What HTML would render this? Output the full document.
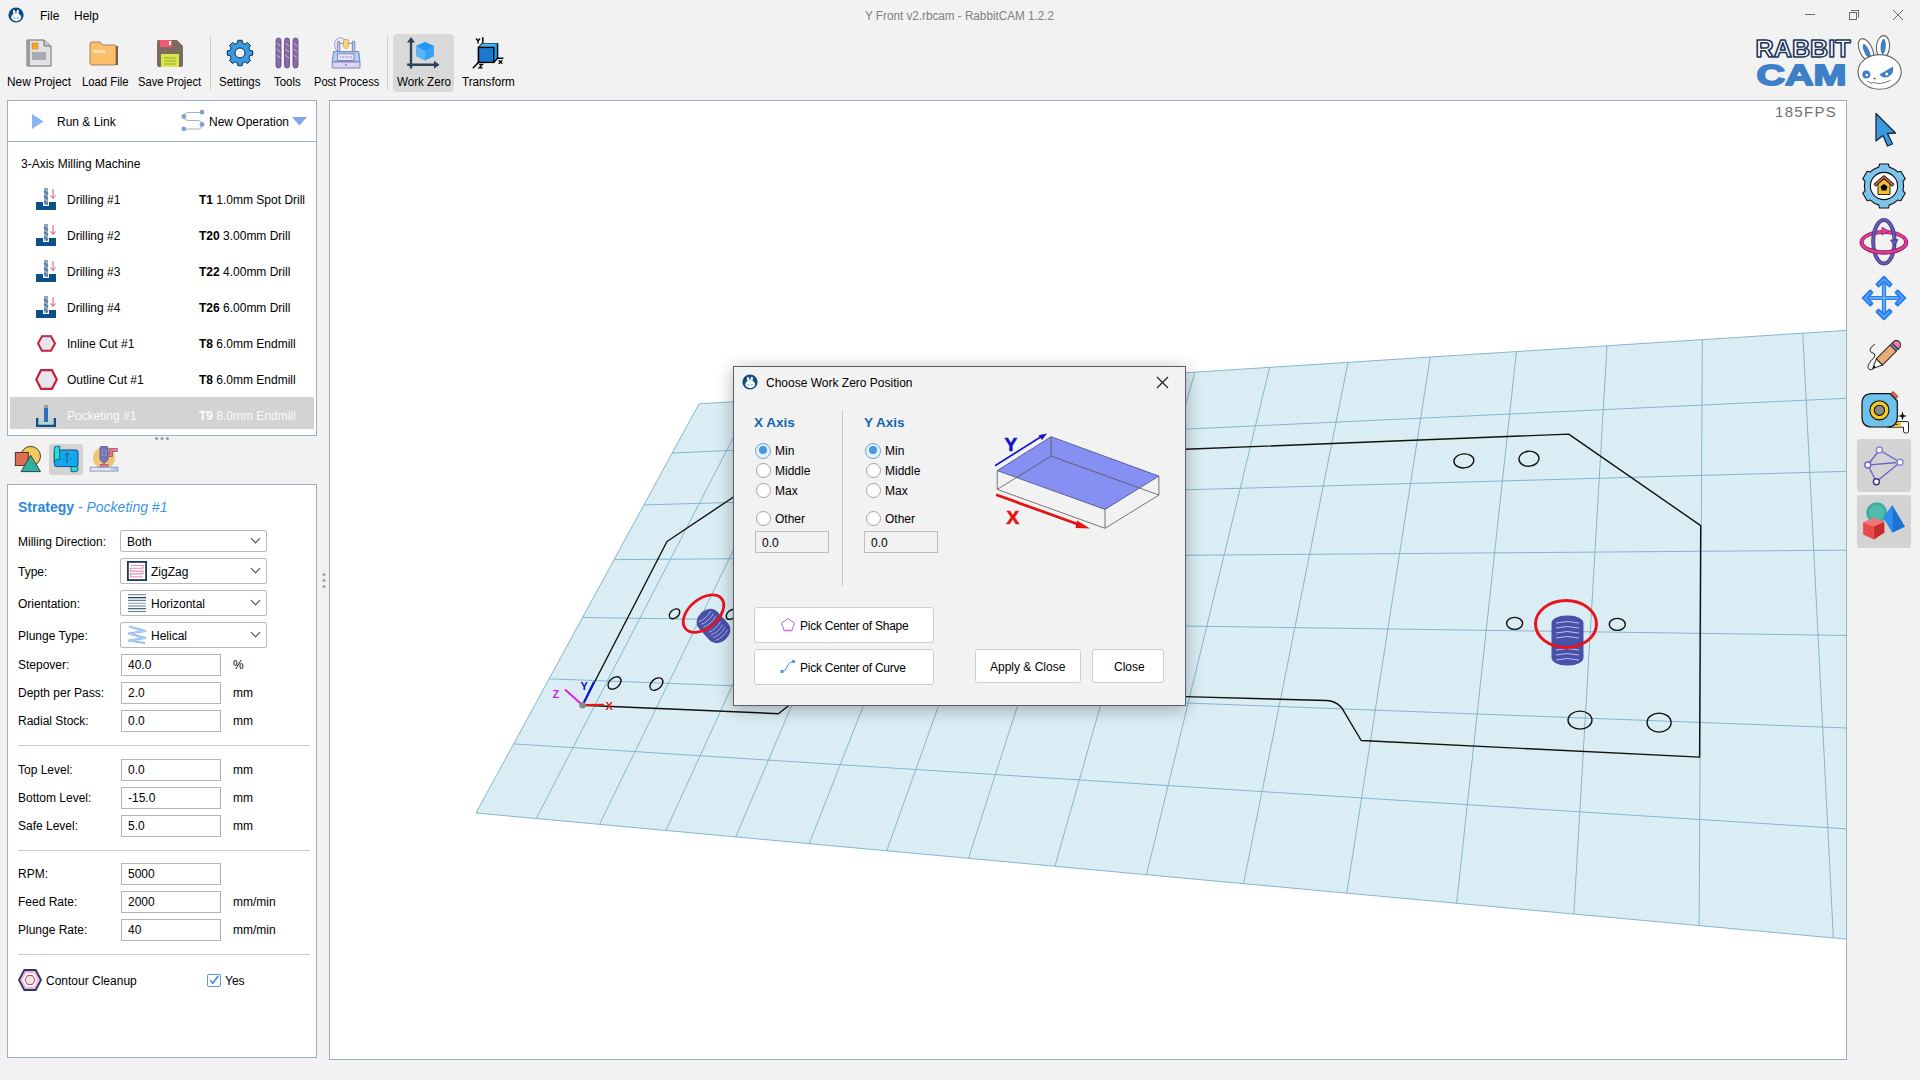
<!DOCTYPE html>
<html><head><meta charset="utf-8">
<style>
*{box-sizing:border-box;margin:0;padding:0}
html,body{width:1920px;height:1080px;overflow:hidden;background:#f2f2f2;font-family:"Liberation Sans",sans-serif;font-size:12px;color:#000}
.a{position:absolute}
.t{position:absolute;white-space:nowrap;line-height:12px;font-size:12px}
.box{position:absolute;background:#fff;border:1px solid #9eafc2}
.inp{position:absolute;background:#fff;border:1px solid #b4b4b4;width:100px;height:22px}
.inp span{position:absolute;left:6px;top:4px;font-size:12px;line-height:12px}
.cmb{position:absolute;background:#fff;border:1px solid #b8b8b8;border-radius:2px;width:147px}
.chev{position:absolute;width:7px;height:7px;border-right:1px solid #444;border-bottom:1px solid #444;transform:rotate(45deg)}
.sep{position:absolute;height:1px;background:#c9c9c9}
.btn{position:absolute;background:#fff;border:1px solid #cfcfcf;border-radius:3px}
.radio{position:absolute;width:15px;height:15px;border-radius:50%;border:1px solid #a2a2a2;background:#fff}
.radio.on{border:1.5px solid #7a9ec4;background:#e2f3ff;width:16px;height:16px}
.radio.on::after{content:"";position:absolute;left:2.75px;top:2.75px;width:7.5px;height:7.5px;border-radius:50%;background:#4a98e0}
</style></head>
<body>
<!-- title bar -->
<svg class="a" style="left:8px;top:7px" width="16" height="16" viewBox="0 0 16 16"><circle cx="8" cy="8" r="7.6" fill="#0f4c7c"/><ellipse cx="8.2" cy="10.3" rx="4.9" ry="3.9" fill="#f4fbff"/><ellipse cx="6.3" cy="5.6" rx="1.3" ry="3" transform="rotate(-12 6.3 5.6)" fill="#e8f4fc"/><ellipse cx="9.6" cy="5.4" rx="1.3" ry="3" transform="rotate(8 9.6 5.4)" fill="#e8f4fc"/><path d="M5.6 11H7M9.2 11.2L10.6 10.6" stroke="#0f4c7c" stroke-width=".8"/></svg>
<div class="t" style="left:40px;top:10px">File</div>
<div class="t" style="left:74px;top:10px">Help</div>
<div class="t" style="left:865px;top:9.5px;color:#808080;transform:scaleX(.975);transform-origin:0 0">Y Front v2.rbcam - RabbitCAM 1.2.2</div>
<div class="a" style="left:1805px;top:14px;width:10px;height:1px;background:#6a6a6a"></div>
<div class="a" style="left:1849px;top:12px;width:8px;height:8px;border:1px solid #6a6a6a"></div>
<div class="a" style="left:1851px;top:10px;width:8px;height:8px;border-top:1px solid #6a6a6a;border-right:1px solid #6a6a6a"></div>
<svg class="a" style="left:1892px;top:9px" width="12" height="12" viewBox="0 0 12 12"><path d="M1 1L11 11M11 1L1 11" stroke="#6a6a6a" stroke-width="1"/></svg>

<!-- toolbar -->
<div class="a" style="left:393px;top:34px;width:61px;height:58px;background:#d9d9d9;border-radius:4px"></div>
<div class="a" style="left:210px;top:35px;width:1px;height:55px;background:#cfcfcf"></div>
<div class="a" style="left:387px;top:35px;width:1px;height:55px;background:#cfcfcf"></div>
<!-- new project icon -->
<svg class="a" style="left:26px;top:39px" width="26" height="28" viewBox="0 0 26 28"><path d="M1 1H18L25 7V27H1Z" fill="#e2e2e4" stroke="#6a6a72" stroke-width="1"/><rect x="1" y="1" width="3" height="26" fill="#9a9aa4"/><path d="M18 1V7H25" fill="#c8c8cc" stroke="#6a6a72" stroke-width="1"/><rect x="6" y="4" width="6" height="6" fill="#f5a623" stroke="#d48a10" stroke-width=".6"/><rect x="6" y="13" width="14" height="8" fill="#a9a9b0"/></svg>
<!-- folder -->
<svg class="a" style="left:89px;top:41px" width="31" height="25" viewBox="0 0 31 25"><path d="M26 5H29V24H26Z" fill="#7a5a48"/><path d="M1 3Q1 1 3 1H11L14 4H26Q27 4 27 6V22Q27 24 25 24H3Q1 24 1 22Z" fill="#fbbf6b" stroke="#8d6c55" stroke-width=".8"/><rect x="4" y="9" width="12" height="3" fill="#fde0b0"/></svg>
<!-- save -->
<svg class="a" style="left:156px;top:39px" width="28" height="29" viewBox="0 0 28 29"><path d="M2 1H21L27 7V26Q27 28 25 28H3Q1 28 1 26V3Q1 1 2 1Z" fill="#7d6b5e"/><rect x="4" y="1" width="12" height="7" fill="#ef5a72"/><rect x="13" y="2" width="2" height="4" fill="#fff"/><rect x="5" y="15" width="18" height="13" fill="#d8e84a"/><path d="M8 19H20M8 22H20M8 25H20" stroke="#9aa82a" stroke-width="1"/></svg>
<!-- settings gear -->
<svg class="a" style="left:226px;top:39px" width="28" height="28" viewBox="0 0 28 28"><path fill="#3a9ae0" stroke="#0b2a48" stroke-width="1" stroke-linejoin="round" d="M11.33 4.16L11.91 1.27L16.09 1.27L16.67 4.16A10.2 10.2 0 0 1 19.07 5.15L21.52 3.52L24.48 6.48L22.85 8.93A10.2 10.2 0 0 1 23.84 11.33L26.73 11.91L26.73 16.09L23.84 16.67A10.2 10.2 0 0 1 22.85 19.07L24.48 21.52L21.52 24.48L19.07 22.85A10.2 10.2 0 0 1 16.67 23.84L16.09 26.73L11.91 26.73L11.33 23.84A10.2 10.2 0 0 1 8.93 22.85L6.48 24.48L3.52 21.52L5.15 19.07A10.2 10.2 0 0 1 4.16 16.67L1.27 16.09L1.27 11.91L4.16 11.33A10.2 10.2 0 0 1 5.15 8.93L3.52 6.48L6.48 3.52L8.93 5.15A10.2 10.2 0 0 1 11.33 4.16Z"/><circle cx="14" cy="14" r="5" fill="#eef2f6" stroke="#0b2a48" stroke-width="1"/></svg>
<!-- tools -->
<svg class="a" style="left:275px;top:37px" width="24" height="32" viewBox="0 0 24 32"><g fill="#8a6aa8" stroke="#5e3f7e" stroke-width=".8"><rect x="1" y="1" width="5" height="30" rx="2.5"/><rect x="9.5" y="1" width="5" height="30" rx="2.5"/><rect x="18" y="1" width="5" height="30" rx="2.5"/></g><path d="M1.5 6l4 3M1.5 12l4 3M1.5 18l4 3M10 6l4 3M10 12l4 3M10 18l4 3M18.5 6l4 3M18.5 12l4 3M18.5 18l4 3" stroke="#c9b3de" stroke-width="1"/></svg>
<!-- post process -->
<svg class="a" style="left:331px;top:36px" width="30" height="33" viewBox="0 0 30 33"><path d="M5.5 15Q2 8 5 4Q9 -.5 14 4" fill="none" stroke="#9a90c0" stroke-width=".9"/><rect x="6.4" y="5" width="2.4" height="11" rx="1.2" fill="#a9d0f5" stroke="#7a70b0" stroke-width=".8"/><rect x="21.4" y="5" width="2.4" height="11" rx="1.2" fill="#a9d0f5" stroke="#7a70b0" stroke-width=".8"/><path d="M8.8 7.3H21.4" stroke="#7a70b0" stroke-width=".9"/><path d="M12.4 4.5Q12.4 3.5 13.5 3.5H16.3Q17.4 3.5 17.4 4.5V10.5L15.8 12.5H14L12.4 10.5Z" fill="#f8d878" stroke="#c09060" stroke-width=".7"/><path d="M2.6 15.6H27.8L29 26H1.2Z" fill="#a9d0f5" stroke="#7a70b0" stroke-width=".9"/><rect x="6.5" y="17.8" width="16.5" height="6.6" fill="#e6e2f8" stroke="#7a70b0" stroke-width=".8"/><path d="M9 21H21" stroke="#a090c8" stroke-width="1.4" stroke-dasharray="1.3 1.3"/><rect x="1.2" y="26" width="27.8" height="6" rx="1" fill="#dcd6f4" stroke="#7a70b0" stroke-width=".9"/><circle cx="15" cy="29" r=".9" fill="#7a70b0"/></svg>
<!-- work zero -->
<svg class="a" style="left:406px;top:36px" width="34" height="34" viewBox="0 0 34 34"><path d="M5 4V32.5M1.2 28.8H30" fill="none" stroke="#2e4258" stroke-width="2.4"/><path d="M5 1L1 6.5H9Z M33.5 28.8L28 24.8V32.8Z" fill="#2e4258"/><path d="M19 6L28 10V20L19 24.5L10 20V10Z" fill="#4aa8f5"/><path d="M19 6L28 10L19 14.5L10 10Z" fill="#2196f0"/><path d="M19 14.5L28 10V20L19 24.5Z" fill="#3aa2f2"/><path d="M10 10L19 14.5V24.5L10 20Z" fill="#5cb4fa"/></svg>
<!-- transform -->
<svg class="a" style="left:472px;top:37px" width="32" height="32" viewBox="0 0 32 32"><path d="M10.8 0.3V7M25.6 21.3H31.4M6.5 25.4L0.8 31.2" stroke="#000" stroke-width="1.5"/><path d="M6.5 10.4L10.2 6.6H25.6V21.3L21.7 25.4H6.5Z" fill="#1a9af8" stroke="#000" stroke-width="1.4" stroke-linejoin="round"/><path d="M6.5 10.4L10.2 6.6H25.6L21.7 10.4Z" fill="#4ab4f2"/><rect x="6.5" y="10.4" width="15.2" height="15" fill="#1a78d0" stroke="#000" stroke-width="1.4"/><path d="M4 1.5L6 4L8 1.5M6 4V6.5" fill="none" stroke="#000" stroke-width="1.3"/><path d="M26.7 23.3L30.3 26.7M30.3 23.3L26.7 26.7" stroke="#000" stroke-width="1.3"/><path d="M7.2 27.5H10.4L7.2 30.8H10.6" fill="none" stroke="#000" stroke-width="1.3"/></svg>

<div class="t" style="left:7px;top:76px;transform:scaleX(0.989);transform-origin:0 0">New Project</div>
<div class="t" style="left:81.5px;top:76px;transform:scaleX(0.942);transform-origin:0 0">Load File</div>
<div class="t" style="left:138.4px;top:76px;transform:scaleX(0.929);transform-origin:0 0">Save Project</div>
<div class="t" style="left:219.3px;top:76px;transform:scaleX(0.955);transform-origin:0 0">Settings</div>
<div class="t" style="left:273.6px;top:76px;transform:scaleX(0.953);transform-origin:0 0">Tools</div>
<div class="t" style="left:313.6px;top:76px;transform:scaleX(0.923);transform-origin:0 0">Post Process</div>
<div class="t" style="left:396.5px;top:76px;transform:scaleX(0.968);transform-origin:0 0">Work Zero</div>
<div class="t" style="left:461.8px;top:76px;transform:scaleX(0.974);transform-origin:0 0">Transform</div>

<!-- logo -->
<svg class="a" style="left:1752px;top:34px" width="160" height="58" viewBox="0 0 160 58">
<text x="3.6" y="23.3" font-family="Liberation Sans" font-weight="bold" font-size="24" fill="#fff" stroke="#1a3558" stroke-width="1.5" stroke-linejoin="round" textLength="95" lengthAdjust="spacingAndGlyphs">RABBIT</text>
<text x="4.4" y="51.2" font-family="Liberation Sans" font-weight="bold" font-size="30" fill="#3d80c8" stroke="#3d80c8" stroke-width="1.8" stroke-linejoin="round" textLength="90" lengthAdjust="spacingAndGlyphs">CAM</text>
<g transform="translate(105,2)"><ellipse cx="9" cy="14" rx="6.3" ry="12.2" transform="rotate(-25 9 14)" fill="#fff" stroke="#666" stroke-width="1.1"/><ellipse cx="26" cy="10.8" rx="6.6" ry="11.2" transform="rotate(5 26 10.8)" fill="#fff" stroke="#666" stroke-width="1.1"/><ellipse cx="9.6" cy="15" rx="2.6" ry="7.5" transform="rotate(-25 9.6 15)" fill="#3d80c8"/><ellipse cx="26.2" cy="10.5" rx="2.6" ry="7.6" transform="rotate(4 26.2 10.5)" fill="#3d80c8"/><ellipse cx="22.6" cy="35.9" rx="21.6" ry="17.3" fill="#fff" stroke="#666" stroke-width="1.1"/><circle cx="9.3" cy="38.6" r="4" fill="#3d80c8"/><circle cx="9.8" cy="39.1" r="1.3" fill="#fff"/><path d="M22.4 38.4L36 30.5Q37.5 38 31 41Q25.5 42.5 22.4 38.4Z" fill="#3d80c8"/><circle cx="29.8" cy="38" r="1.5" fill="#fff"/><ellipse cx="17.6" cy="42.6" rx="1.2" ry=".8" fill="#555"/><path d="M10.3 45Q14 48.5 17.6 46.5Q22 49.3 33.5 44.5" fill="none" stroke="#666" stroke-width=".9"/></g>
</svg>

<!-- left panel: ops -->
<div class="box" style="left:7px;top:100px;width:310px;height:336px"></div>
<div class="a" style="left:8px;top:141px;width:308px;height:1px;background:#9eafc2"></div>
<svg class="a" style="left:32px;top:114px" width="12" height="15" viewBox="0 0 12 15"><path d="M0 0L11.5 7.5L0 15Z" fill="#8ab6ee"/></svg>
<div class="t" style="left:57px;top:116px">Run &amp; Link</div>
<svg class="a" style="left:180px;top:109px" width="26" height="23" viewBox="0 0 26 23"><path d="M4 7.5Q4 3.5 8 3.5H22M4 7.5Q4 11.5 8 11.5H18Q22 11.5 22 15.5Q22 20 18 20H4" fill="none" stroke="#a8b0bc" stroke-width="1"/><circle cx="3.8" cy="7.5" r="2.4" fill="#7fa3d8"/><circle cx="22" cy="3.2" r="2.4" fill="#7fa3d8"/><circle cx="22" cy="15.5" r="2.4" fill="#7fa3d8"/><circle cx="3.8" cy="19.8" r="2.4" fill="#7fa3d8"/></svg>
<div class="t" style="left:209px;top:116px">New Operation</div>
<svg class="a" style="left:292px;top:117px" width="16" height="9" viewBox="0 0 16 9"><path d="M0 0H15L7.5 8.5Z" fill="#7ea9e8"/></svg>

<div class="t" style="left:21px;top:158px">3-Axis Milling Machine</div>
<div class="a" style="left:10px;top:397px;width:304px;height:32px;background:#d3d3d3"></div>
<svg class="a" style="left:36px;top:188px" width="21" height="23" viewBox="0 0 21 23"><path d="M0 14H7V18H13V14H20V22H0Z" fill="#0d4f8b"/><rect x="8" y="0" width="4" height="17" fill="#9aa6b0"/><path d="M8 3L12 6M8 8L12 11M8 13L12 16" stroke="#2a70c0" stroke-width="1.3"/><path d="M17 1V10M14.5 7.5L17 10.5L19.5 7.5" fill="none" stroke="#e0507a" stroke-width="1"/></svg>
<div class="t" style="left:67px;top:194px;font-size:12px;line-height:12px;color:#000">Drilling #1</div>
<div class="t" style="left:199px;top:194px;font-size:12px;line-height:12px;color:#000"><b>T1</b> 1.0mm Spot Drill</div>
<svg class="a" style="left:36px;top:224px" width="21" height="23" viewBox="0 0 21 23"><path d="M0 14H7V18H13V14H20V22H0Z" fill="#0d4f8b"/><rect x="8" y="0" width="4" height="17" fill="#9aa6b0"/><path d="M8 3L12 6M8 8L12 11M8 13L12 16" stroke="#2a70c0" stroke-width="1.3"/><path d="M17 1V10M14.5 7.5L17 10.5L19.5 7.5" fill="none" stroke="#e0507a" stroke-width="1"/></svg>
<div class="t" style="left:67px;top:230px;font-size:12px;line-height:12px;color:#000">Drilling #2</div>
<div class="t" style="left:199px;top:230px;font-size:12px;line-height:12px;color:#000"><b>T20</b> 3.00mm Drill</div>
<svg class="a" style="left:36px;top:260px" width="21" height="23" viewBox="0 0 21 23"><path d="M0 14H7V18H13V14H20V22H0Z" fill="#0d4f8b"/><rect x="8" y="0" width="4" height="17" fill="#9aa6b0"/><path d="M8 3L12 6M8 8L12 11M8 13L12 16" stroke="#2a70c0" stroke-width="1.3"/><path d="M17 1V10M14.5 7.5L17 10.5L19.5 7.5" fill="none" stroke="#e0507a" stroke-width="1"/></svg>
<div class="t" style="left:67px;top:266px;font-size:12px;line-height:12px;color:#000">Drilling #3</div>
<div class="t" style="left:199px;top:266px;font-size:12px;line-height:12px;color:#000"><b>T22</b> 4.00mm Drill</div>
<svg class="a" style="left:36px;top:296px" width="21" height="23" viewBox="0 0 21 23"><path d="M0 14H7V18H13V14H20V22H0Z" fill="#0d4f8b"/><rect x="8" y="0" width="4" height="17" fill="#9aa6b0"/><path d="M8 3L12 6M8 8L12 11M8 13L12 16" stroke="#2a70c0" stroke-width="1.3"/><path d="M17 1V10M14.5 7.5L17 10.5L19.5 7.5" fill="none" stroke="#e0507a" stroke-width="1"/></svg>
<div class="t" style="left:67px;top:302px;font-size:12px;line-height:12px;color:#000">Drilling #4</div>
<div class="t" style="left:199px;top:302px;font-size:12px;line-height:12px;color:#000"><b>T26</b> 6.00mm Drill</div>
<svg class="a" style="left:37px;top:335px" width="19" height="17" viewBox="0 0 19 17"><path d="M5 1.2H14L18 8.5L14 15.8H5L1 8.5Z" fill="#e6e6ec" stroke="#c8203a" stroke-width="2"/><path d="M5 1.2H14" stroke="#7a5aa8" stroke-width="1"/></svg>
<div class="t" style="left:67px;top:338px;font-size:12px;line-height:12px;color:#000">Inline Cut #1</div>
<div class="t" style="left:199px;top:338px;font-size:12px;line-height:12px;color:#000"><b>T8</b> 6.0mm Endmill</div>
<svg class="a" style="left:35px;top:369px" width="23" height="21" viewBox="0 0 23 21"><path d="M6 1.2H17L21.8 10.5L17 19.8H6L1.2 10.5Z" fill="#e6e6ec" stroke="#c8203a" stroke-width="2.2"/></svg>
<div class="t" style="left:67px;top:374px;font-size:12px;line-height:12px;color:#000">Outline Cut #1</div>
<div class="t" style="left:199px;top:374px;font-size:12px;line-height:12px;color:#000"><b>T8</b> 6.0mm Endmill</div>
<svg class="a" style="left:36px;top:405px" width="21" height="23" viewBox="0 0 21 23"><path d="M0 13H2.5V19.5H17.5V13H20V22H0Z" fill="#0d4f8b"/><rect x="2.5" y="14" width="15" height="5.5" fill="#b8d0d0"/><rect x="8" y="0" width="4" height="17" fill="#2a70c0"/><rect x="8" y="0" width="4" height="3" fill="#9a9a9a"/></svg>
<div class="t" style="left:67px;top:410px;font-size:12px;line-height:12px;color:#fafafa">Pocketing #1</div>
<div class="t" style="left:199px;top:410px;font-size:12px;line-height:12px;color:#fafafa"><b>T9</b> 8.0mm Endmill</div>

<svg class="a" style="left:154px;top:436px" width="16" height="5" viewBox="0 0 16 5"><circle cx="2.5" cy="2.5" r="1.5" fill="#999"/><circle cx="8" cy="2.5" r="1.5" fill="#999"/><circle cx="13.5" cy="2.5" r="1.5" fill="#999"/></svg>
<!-- panel tab icons -->
<svg class="a" style="left:14px;top:445px" width="28" height="28" viewBox="0 0 28 28"><circle cx="16.7" cy="11.2" r="9.8" fill="#f1c85a" stroke="#3a2a1a" stroke-width=".9"/><rect x="1.3" y="7.4" width="13" height="13.2" fill="#e06e52" stroke="#3a2a1a" stroke-width=".9"/><path d="M7.1 26.6L16.7 10.3L26.5 26.6Z" fill="#2fb0a2" stroke="#1e3a3a" stroke-width=".9" stroke-linejoin="round"/></svg>
<div class="a" style="left:49px;top:444px;width:34px;height:31px;background:#d3d3d3;border-radius:3px"></div>
<svg class="a" style="left:53px;top:445px" width="27" height="28" viewBox="0 0 27 28"><path d="M4 5H23Q25 5 25 7V20.5Q25 21.6 23 21.6H4Q1.3 21.6 1.3 19V7Z" fill="#12a8ea" stroke="#184a86" stroke-width="1"/><path d="M1.3 16V3.5Q1.3 1.3 3.5 1.3H6.7V14.5Q4 14 1.3 16Z" fill="#22e2c8" stroke="#184a86" stroke-width=".9"/><path d="M18 21.6H23.5Q25 21.6 25 23.5V24.5Q25 26.7 22.5 26.7H18Z" fill="#22e2c8" stroke="#184a86" stroke-width=".9"/><path d="M14 8V18.5M11.8 10.2L14 8L16.2 10.2" fill="none" stroke="#184a86" stroke-width=".9"/><path d="M9.5 13L11 14.5M19 13L17.5 14.5" stroke="#184a86" stroke-width=".7"/></svg>
<svg class="a" style="left:89px;top:445px" width="30" height="29" viewBox="0 0 30 29"><circle cx="15" cy="13" r="11" fill="#f0c47e"/><path d="M18.9 10H22V5H28.8" fill="none" stroke="#9a3a5a" stroke-width="3.4"/><path d="M18.9 10H22V5H28.8" fill="none" stroke="#e87898" stroke-width="1.8"/><path d="M11.1 3Q11.1 1.6 12.5 1.6H17.5Q18.9 1.6 18.9 3V14.8L15 18.5L11.1 14.8Z" fill="#7078b8" stroke="#4a4a88" stroke-width=".8"/><path d="M13 5V12M17 5V12" stroke="#c8d0f0" stroke-width=".8" stroke-dasharray="1.2 1.2"/><rect x="11.4" y="19.6" width="7.5" height="2.6" fill="#e87898" stroke="#9a3a5a" stroke-width=".6"/><rect x="1.2" y="22.2" width="27.6" height="3.9" fill="#dce8fa" stroke="#8a8ab8" stroke-width=".9"/><rect x="22" y="23" width="6" height="2.4" fill="#b0ccf0"/></svg>

<!-- strategy box -->
<div class="box" style="left:7px;top:484px;width:310px;height:574px"></div>
<div class="t" style="left:18px;top:500px;font-size:14px;line-height:14px;font-weight:bold;color:#2a87d6">Strategy <span style="font-weight:normal;font-style:italic;color:#3b95e0;font-size:14px">- Pocketing #1</span></div>

<div class="t" style="left:18px;top:536px;font-size:12px;line-height:12px;">Milling Direction:</div>
<div class="cmb" style="left:120px;top:530px;height:22px"></div>

<div class="t" style="left:127px;top:536px;font-size:12px;line-height:12px;">Both</div>
<div class="chev" style="left:252px;top:535px"></div>
<div class="t" style="left:18px;top:566px;font-size:12px;line-height:12px;">Type:</div>
<div class="cmb" style="left:120px;top:558px;height:26px"></div>
<svg class="a" style="left:127px;top:561px" width="20" height="20" viewBox="0 0 20 20"><rect x="0.9" y="0.9" width="18.2" height="18.2" fill="#fff" stroke="#173a5c" stroke-width="1.8"/><path d="M3.5 4.5H16V7.3H3.5V10.1H16V12.9H3.5V15.7H16" fill="none" stroke="#e98fb0" stroke-width="1.1"/></svg>
<div class="t" style="left:151px;top:566px;font-size:12px;line-height:12px;">ZigZag</div>
<div class="chev" style="left:252px;top:565px"></div>
<div class="t" style="left:18px;top:598px;font-size:12px;line-height:12px;">Orientation:</div>
<div class="cmb" style="left:120px;top:590px;height:26px"></div>
<svg class="a" style="left:127px;top:593px" width="20" height="20" viewBox="0 0 20 20"><path d="M1 1.8H19M1 7.4H19M1 13H19M1 18.5H19" stroke="#5d7d9c" stroke-width="1.1"/><path d="M1 4.6H19M1 15.7H19" stroke="#1a3a5a" stroke-width="1.1"/><path d="M1 10.3H19" stroke="#8aaac8" stroke-width="1.1"/></svg>
<div class="t" style="left:151px;top:598px;font-size:12px;line-height:12px;">Horizontal</div>
<div class="chev" style="left:252px;top:597px"></div>
<div class="t" style="left:18px;top:630px;font-size:12px;line-height:12px;">Plunge Type:</div>
<div class="cmb" style="left:120px;top:622px;height:26px"></div>
<svg class="a" style="left:127px;top:624px" width="20" height="20" viewBox="0 0 20 20"><path d="M2 2.5L18 7L2 9.5L18 14L2 16.5L18 19" fill="none" stroke="#7ab0e8" stroke-width="2.2" stroke-linejoin="round"/><path d="M2 2.5L18 7L2 9.5L18 14L2 16.5L18 19" fill="none" stroke="#d0e6fa" stroke-width=".7"/></svg>
<div class="t" style="left:151px;top:630px;font-size:12px;line-height:12px;">Helical</div>
<div class="chev" style="left:252px;top:629px"></div>
<div class="t" style="left:18px;top:659px;font-size:12px;line-height:12px;">Stepover:</div>
<div class="inp" style="left:121px;top:654px"></div>
<div class="t" style="left:128px;top:659px;font-size:12px;line-height:12px;">40.0</div>
<div class="t" style="left:233px;top:659px;font-size:12px;line-height:12px;">%</div>
<div class="t" style="left:18px;top:687px;font-size:12px;line-height:12px;">Depth per Pass:</div>
<div class="inp" style="left:121px;top:682px"></div>
<div class="t" style="left:128px;top:687px;font-size:12px;line-height:12px;">2.0</div>
<div class="t" style="left:233px;top:687px;font-size:12px;line-height:12px;">mm</div>
<div class="t" style="left:18px;top:715px;font-size:12px;line-height:12px;">Radial Stock:</div>
<div class="inp" style="left:121px;top:710px"></div>
<div class="t" style="left:128px;top:715px;font-size:12px;line-height:12px;">0.0</div>
<div class="t" style="left:233px;top:715px;font-size:12px;line-height:12px;">mm</div>
<div class="sep" style="left:18px;top:745px;width:292px"></div>
<div class="t" style="left:18px;top:764px;font-size:12px;line-height:12px;">Top Level:</div>
<div class="inp" style="left:121px;top:759px"></div>
<div class="t" style="left:128px;top:764px;font-size:12px;line-height:12px;">0.0</div>
<div class="t" style="left:233px;top:764px;font-size:12px;line-height:12px;">mm</div>
<div class="t" style="left:18px;top:792px;font-size:12px;line-height:12px;">Bottom Level:</div>
<div class="inp" style="left:121px;top:787px"></div>
<div class="t" style="left:128px;top:792px;font-size:12px;line-height:12px;">-15.0</div>
<div class="t" style="left:233px;top:792px;font-size:12px;line-height:12px;">mm</div>
<div class="t" style="left:18px;top:820px;font-size:12px;line-height:12px;">Safe Level:</div>
<div class="inp" style="left:121px;top:815px"></div>
<div class="t" style="left:128px;top:820px;font-size:12px;line-height:12px;">5.0</div>
<div class="t" style="left:233px;top:820px;font-size:12px;line-height:12px;">mm</div>
<div class="sep" style="left:18px;top:850px;width:292px"></div>
<div class="t" style="left:18px;top:868px;font-size:12px;line-height:12px;">RPM:</div>
<div class="inp" style="left:121px;top:863px"></div>
<div class="t" style="left:128px;top:868px;font-size:12px;line-height:12px;">5000</div>
<div class="t" style="left:18px;top:896px;font-size:12px;line-height:12px;">Feed Rate:</div>
<div class="inp" style="left:121px;top:891px"></div>
<div class="t" style="left:128px;top:896px;font-size:12px;line-height:12px;">2000</div>
<div class="t" style="left:233px;top:896px;font-size:12px;line-height:12px;">mm/min</div>
<div class="t" style="left:18px;top:924px;font-size:12px;line-height:12px;">Plunge Rate:</div>
<div class="inp" style="left:121px;top:919px"></div>
<div class="t" style="left:128px;top:924px;font-size:12px;line-height:12px;">40</div>
<div class="t" style="left:233px;top:924px;font-size:12px;line-height:12px;">mm/min</div>
<div class="sep" style="left:18px;top:954px;width:292px"></div>

<!-- contour cleanup -->
<svg class="a" style="left:18px;top:969px" width="24" height="22" viewBox="0 0 24 22"><path d="M6.3 1H17.7L23 11L17.7 21H6.3L1 11Z" fill="#f2b8d0" stroke="#2a3668" stroke-width="1.8" stroke-linejoin="round"/><path d="M8 4.2H16L19.6 11L16 17.8H8L4.4 11Z" fill="#fff"/><path d="M9.4 6.6H14.6L17 11L14.6 15.4H9.4L7 11Z" fill="#e8e8ec" stroke="#c03868" stroke-width="1"/></svg>
<div class="t" style="left:46px;top:974.5px">Contour Cleanup</div>
<div class="a" style="left:207px;top:973.5px;width:14px;height:13.5px;border:1px solid #5a9ad8;border-radius:2px;background:#fff"></div>
<svg class="a" style="left:208px;top:974px" width="12" height="12" viewBox="0 0 12 12"><path d="M2.2 6.2L4.8 9.2L10.2 2" fill="none" stroke="#3a8ae0" stroke-width="1.6"/></svg>
<div class="t" style="left:225px;top:974.5px">Yes</div>

<svg class="a" style="left:321px;top:571px" width="6" height="20" viewBox="0 0 6 20"><circle cx="3" cy="3.5" r="1.6" fill="#a5a5a5"/><circle cx="3" cy="9.5" r="1.6" fill="#a5a5a5"/><circle cx="3" cy="15.5" r="1.6" fill="#a5a5a5"/></svg>

<!-- viewport -->
<div class="box" style="left:329px;top:100px;width:1518px;height:960px"></div>
<svg class="a" style="left:0;top:0" width="1920" height="1080" viewBox="0 0 1920 1080">
<defs><clipPath id="vp"><rect x="330" y="101" width="1516" height="958"/></clipPath></defs>
<g clip-path="url(#vp)">
<polygon points="698.96,403.92 476.01,812.98 2132.91,965.51 2020.6,319.27" fill="#daedf4"/>
<path d="M698.96 403.92L476.01 812.98M752.5 400.49L536.3 818.53M808.16 396.92L599.53 824.35M866.09 393.21L665.93 830.46M926.4 389.35L735.74 836.89M989.26 385.32L809.23 843.65M1054.83 381.12L886.69 850.78M1123.29 376.74L968.47 858.31M1194.83 372.16L1054.93 866.27M1269.67 367.36L1146.48 874.7M1348.04 362.34L1243.59 883.64M1430.19 357.08L1346.77 893.14M1516.41 351.56L1456.63 903.25M1607.01 345.76L1573.82 914.04M1702.33 339.65L1699.11 925.57M1802.75 333.22L1833.36 937.93M1908.68 326.44L1977.58 951.21M2020.6 319.27L2132.91 965.51M698.96 403.92L2020.6 319.27M672.16 453.08L2032.83 389.63M643.91 504.92L2046.07 465.79M614.08 559.65L2060.44 548.52M582.53 617.52L2076.11 638.69M549.13 678.82L2093.26 737.36M513.68 743.86L2112.11 845.79M476.01 812.98L2132.91 965.51" stroke="#7fb3ca" stroke-width="0.95" fill="none"/>
<g fill="none" stroke="#111" stroke-width="1.4" stroke-linejoin="round">
<path d="M733.5 497L667 541.5L582.6 705.2L778.4 713.7L789.5 705"/>
<path d="M1185 449.3L1568.7 434.1L1700.7 525.6L1699.6 757.1L1361.2 740.5L1341.8 707.8Q1336 700.8 1326 700.5L1185 696.6"/>
<ellipse cx="1463.9" cy="460.9" rx="10" ry="7" transform="rotate(-5 1463.9 460.9)"/>
<ellipse cx="1529" cy="458.7" rx="10" ry="7.5" transform="rotate(-5 1529 458.7)"/>
<ellipse cx="1514.6" cy="623.4" rx="8" ry="6" transform="rotate(0 1514.6 623.4)"/>
<ellipse cx="1617.3" cy="624.4" rx="8" ry="6" transform="rotate(0 1617.3 624.4)"/>
<ellipse cx="1580" cy="720.1" rx="12" ry="9" transform="rotate(0 1580 720.1)"/>
<ellipse cx="1659.1" cy="722.6" rx="12" ry="9.5" transform="rotate(0 1659.1 722.6)"/>
<ellipse cx="674.5" cy="613.8" rx="6" ry="4" transform="rotate(-40 674.5 613.8)"/>
<ellipse cx="614.5" cy="683" rx="7.5" ry="5" transform="rotate(-42 614.5 683)"/>
<ellipse cx="656.4" cy="684.1" rx="7.5" ry="5" transform="rotate(-42 656.4 684.1)"/>
<ellipse cx="731.5" cy="614.4" rx="6" ry="4" transform="rotate(-40 731.5 614.4)"/>
</g>
<rect x="1551.5" y="615.5" width="32" height="50" rx="15" ry="8" fill="#4a50a8"/>
<g fill="none" stroke="#b8c0f0" stroke-width="1"><path d="M1556 623Q1567 620 1579 623"/><path d="M1556 628Q1567 625 1579 628"/><path d="M1556 633Q1567 630 1579 633"/><path d="M1556 638Q1567 635 1579 638"/><path d="M1556 650Q1567 647 1579 650"/><path d="M1556 655Q1567 652 1579 655"/><path d="M1556 660Q1567 657 1579 660"/></g>
<ellipse cx="1566" cy="624" rx="30.5" ry="23.5" fill="none" stroke="#e8141c" stroke-width="3"/>
<g transform="rotate(48 713.5 626)"><rect x="695.5" y="613.5" width="36" height="25" rx="10" ry="12" fill="#4a50a8"/></g>
<g fill="none" stroke="#b4bcf0" stroke-width=".9"><path d="M698.9 621.7Q706.8 618.6 710.7 611.0"/><path d="M701.3 624.4Q709.2 621.2 713.2 613.7"/><path d="M703.7 627.0Q711.6 623.9 715.6 616.3"/><path d="M706.1 629.7Q714.0 626.6 718.0 619.0"/><path d="M708.5 632.4Q716.4 629.3 720.4 621.7"/><path d="M710.9 635.1Q718.9 631.9 722.8 624.4"/><path d="M713.3 637.7Q721.3 634.6 725.2 627.0"/><path d="M715.7 640.4Q723.7 637.3 727.6 629.7"/></g>
<ellipse cx="703.5" cy="613.6" rx="23.5" ry="14.5" transform="rotate(-40 703.5 613.6)" fill="none" stroke="#e8141c" stroke-width="2.8"/>
<path d="M582.6 705.2L594 682" stroke="#1010e0" stroke-width="2.2"/>
<path d="M582.6 705.2L604 704.8" stroke="#e01818" stroke-width="2.2"/>
<path d="M582.6 705.2L565 689.4" stroke="#e020e0" stroke-width="2"/>
<circle cx="582.6" cy="705.2" r="3.3" fill="#888"/>
<text x="580.5" y="690" font-family="Liberation Sans" font-weight="bold" font-size="11" fill="#0a0ad0">Y</text>
<text x="552.5" y="698" font-family="Liberation Sans" font-weight="bold" font-size="11" fill="#d020e0">Z</text>
<text x="605.5" y="710" font-family="Liberation Sans" font-weight="bold" font-size="11" fill="#d81818">X</text>
</g>
</svg>
<div class="t" style="left:1775px;top:104px;font-size:15px;line-height:15px;color:#707070;letter-spacing:1.3px">185FPS</div>

<!-- right toolbar -->
<div class="a" style="left:1857px;top:439px;width:54px;height:53px;background:#d3d3d3;border-radius:3px"></div>
<div class="a" style="left:1857px;top:495px;width:54px;height:53px;background:#d3d3d3;border-radius:3px"></div>
<svg class="a" style="left:1874px;top:112px" width="24" height="36" viewBox="0 0 24 36"><path d="M2 1.5L21.5 21L13.5 21.5L18.5 32L13.5 34L9 23.5L2 29Z" fill="#3a98dc" stroke="#1a2a3a" stroke-width="1.3" stroke-linejoin="round"/></svg>
<svg class="a" style="left:1861px;top:163px" width="46" height="46" viewBox="0 0 46 46"><path fill="#7cc4ec" stroke="#111" stroke-width="1.1" stroke-linejoin="round" d="M17.67 4.14L18.63 1.03L27.37 1.03L28.33 4.14A19.6 19.6 0 0 1 36.67 8.95L39.84 8.23L44.21 15.80L42.00 18.19A19.6 19.6 0 0 1 42.00 27.81L44.21 30.20L39.84 37.77L36.67 37.05A19.6 19.6 0 0 1 28.33 41.86L27.37 44.97L18.63 44.97L17.67 41.86A19.6 19.6 0 0 1 9.33 37.05L6.16 37.77L1.79 30.20L4.00 27.81A19.6 19.6 0 0 1 4.00 18.19L1.79 15.80L6.16 8.23L9.33 8.95A19.6 19.6 0 0 1 17.67 4.14Z"/><circle cx="23" cy="23" r="13.6" fill="#fff" stroke="#111" stroke-width="1.1"/><path d="M13.5 22.5L23 14L32.5 22.5" fill="none" stroke="#111" stroke-width="3.2" stroke-linejoin="round"/><path d="M13.5 22.5L23 14L32.5 22.5" fill="none" stroke="#e8704a" stroke-width="1.6" stroke-linejoin="round"/><path d="M17 21L23 16L29 21V31.5H17Z" fill="#f3c030" stroke="#111" stroke-width=".9"/><path d="M23 21L26.5 23.6L25.3 27.5H20.7L19.5 23.6Z" fill="#000"/></svg>
<svg class="a" style="left:1858px;top:216px" width="52" height="52" viewBox="0 0 52 52"><g fill="none"><ellipse cx="25.9" cy="26.2" rx="22.3" ry="10.2" stroke="#8a2a6a" stroke-width="4"/><ellipse cx="25.9" cy="26.2" rx="22.3" ry="10.2" stroke="#e83a98" stroke-width="2.4"/><ellipse cx="25.9" cy="25.7" rx="10.7" ry="21.8" stroke="#3a3a7a" stroke-width="4"/><ellipse cx="25.9" cy="25.7" rx="10.7" ry="21.8" stroke="#6a58b8" stroke-width="2.4"/><path d="M48.2 26.2A22.3 10.2 0 0 1 3.6 26.2" stroke="#8a2a6a" stroke-width="4"/><path d="M48.2 26.2A22.3 10.2 0 0 1 3.6 26.2" stroke="#e83a98" stroke-width="2.4"/></g><path d="M24 11.2L31 15L24 19Z" fill="#e83a98" stroke="#8a2a6a" stroke-width=".8"/><path d="M32.5 24L36.4 30L40 23.6Z" fill="#6a58b8" stroke="#3a3a7a" stroke-width=".8"/></svg>
<svg class="a" style="left:1861px;top:275px" width="46" height="46" viewBox="0 0 46 46"><path d="M23 5V41M5 23H41" stroke="#2a7ff0" stroke-width="4.2"/><path d="M23 5V41M5 23H41" stroke="#7ab8f6" stroke-width="1.4"/><g fill="#74b2f4" stroke="#2a7ff0" stroke-width="2.2" stroke-linejoin="round"><path d="M23 1.8L30.5 9.3L28.5 11.3L23 6.5L17.5 11.3L15.5 9.3Z"/><path d="M23 44.2L30.5 36.7L28.5 34.7L23 39.5L17.5 34.7L15.5 36.7Z"/><path d="M1.8 23L9.3 15.5L11.3 17.5L6.5 23L11.3 28.5L9.3 30.5Z"/><path d="M44.2 23L36.7 15.5L34.7 17.5L39.5 23L34.7 28.5L36.7 30.5Z"/></g></svg>
<svg class="a" style="left:1866px;top:338px" width="40" height="36" viewBox="0 0 40 36"><path d="M8.9 6.1Q3.5 9.5 4 12.5Q4.8 15 8 15.5Q9.8 16.5 8 19.5Q1.5 26 2 29.5Q3 33 7 31" fill="none" stroke="#222" stroke-width="1"/><g transform="translate(6.7 30.6) rotate(-45)"><path d="M0 0L9.5 -4.3V4.3Z" fill="#fff" stroke="#222" stroke-width="1" stroke-linejoin="round"/><path d="M0 0L3.2 -1.5V1.5Z" fill="#111"/><rect x="9.5" y="-4.3" width="19.5" height="8.6" fill="#f2b27a" stroke="#222" stroke-width="1"/><path d="M10 -1.5H29M10 1.5H29" stroke="#c98a55" stroke-width=".6"/><rect x="29" y="-4.3" width="2.8" height="8.6" fill="#6f7ec0" stroke="#222" stroke-width=".8"/><path d="M31.8 -4.3H33.5A4.3 4.3 0 0 1 33.5 4.3H31.8Z" fill="#ec7f9e" stroke="#222" stroke-width="1"/></g></svg>
<svg class="a" style="left:1861px;top:391px" width="48" height="44" viewBox="0 0 48 44"><rect x="29.4" y="2.3" width="7" height="4.6" transform="rotate(45 32.9 4.6)" fill="#e8604a" stroke="#222" stroke-width=".6"/><path d="M26 30.6H46.5Q47.5 30.6 47.5 32V40Q47.5 42 45.5 42H44.5Q42.5 42 42.5 40V36.2H26Z" fill="#fff" stroke="#222" stroke-width="1"/><rect x="28" y="31.2" width="12" height="4.6" fill="#f3c52a"/><path d="M30 33.5H37" stroke="#222" stroke-width="1.2" stroke-dasharray="1.5 1"/><path d="M11 2.6H29L36.3 10V26Q36.3 36 26.3 36H11Q1 36 1 26V12.6Q1 2.6 11 2.6Z" fill="#6ec2ec" stroke="#111" stroke-width="1.2"/><circle cx="18.4" cy="19.3" r="9.6" fill="#f4c82a" stroke="#111" stroke-width="1.1"/><circle cx="18.4" cy="19.3" r="5.1" fill="#8a8a8a" stroke="#111" stroke-width="1.1"/><path d="M41.5 20.5L42.6 23.9L46 25L42.6 26.1L41.5 29.5L40.4 26.1L37 25L40.4 23.9Z" fill="#111"/></svg>
<svg class="a" style="left:1862px;top:445px" width="44" height="42" viewBox="0 0 44 42"><path d="M17.4 5L38 17.2L5.8 20L14.4 36.7L38 17.2M17.4 5L5.8 20" fill="none" stroke="#6a60c8" stroke-width="1.3"/><circle cx="17.4" cy="5" r="3" fill="#fff" stroke="#8a80e0" stroke-width="1.4"/><circle cx="38" cy="17.2" r="3" fill="#fff" stroke="#8a80e0" stroke-width="1.4"/><circle cx="5.8" cy="20" r="3" fill="#fff" stroke="#6a60d0" stroke-width="1.4"/><circle cx="14.4" cy="36.7" r="3" fill="#fff" stroke="#3a3090" stroke-width="1.4"/></svg>
<svg class="a" style="left:1862px;top:500px" width="46" height="42" viewBox="0 0 46 42"><circle cx="14.7" cy="12.8" r="10.5" fill="#3fae9e"/><circle cx="14.7" cy="12.8" r="7.5" fill="#52bcac"/><path d="M30.2 5L21.3 17.8L30.2 32.8Z" fill="#2a8ff0"/><path d="M30.2 5L43 26.7L30.2 32.8Z" fill="#1c72d2"/><path d="M1.1 22.2L11.9 17.8L22.4 21.7L11.9 26.5Z" fill="#f27474"/><path d="M1.1 22.2L11.9 26.5V39.4L1.1 34.4Z" fill="#ea4a4a"/><path d="M11.9 26.5L22.4 21.7V32.8L11.9 39.4Z" fill="#c92a2a"/></svg>

<!-- dialog -->
<div class="a" style="left:733px;top:366px;width:453px;height:340px;background:#f2f2f2;border:1px solid #596166;box-shadow:0 3px 16px rgba(0,0,0,.3)"></div>
<svg class="a" style="left:742px;top:374px" width="16" height="16" viewBox="0 0 16 16"><circle cx="8" cy="8" r="7.6" fill="#0f4c7c"/><ellipse cx="8.2" cy="10.3" rx="4.9" ry="3.9" fill="#f4fbff"/><ellipse cx="6.3" cy="5.6" rx="1.3" ry="3" transform="rotate(-12 6.3 5.6)" fill="#e8f4fc"/><ellipse cx="9.6" cy="5.4" rx="1.3" ry="3" transform="rotate(8 9.6 5.4)" fill="#e8f4fc"/><path d="M5.6 11H7M9.2 11.2L10.6 10.6" stroke="#0f4c7c" stroke-width=".8"/></svg>
<div class="t" style="left:766px;top:377px;font-size:12px;line-height:12px;">Choose Work Zero Position</div>
<svg class="a" style="left:1156px;top:376px" width="13" height="13" viewBox="0 0 13 13"><path d="M1 1L12 12M12 1L1 12" stroke="#222" stroke-width="1.2"/></svg>
<div class="t" style="left:754px;top:416px;font-size:13px;line-height:13px;font-weight:bold;color:#1566b0;font-size:13.5px">X Axis</div>
<div class="t" style="left:864px;top:416px;font-size:13px;line-height:13px;font-weight:bold;color:#1566b0;font-size:13.5px">Y Axis</div>
<div class="a" style="left:842px;top:410px;width:1px;height:176px;background:#c8c8c8"></div>
<div class="radio on" style="left:755.3px;top:442.5px"></div>
<div class="t" style="left:775px;top:445px;font-size:12px;line-height:12px;">Min</div>
<div class="radio on" style="left:865.3px;top:442.5px"></div>
<div class="t" style="left:885px;top:445px;font-size:12px;line-height:12px;">Min</div>
<div class="radio" style="left:755.8px;top:463.1px"></div>
<div class="t" style="left:775px;top:465px;font-size:12px;line-height:12px;">Middle</div>
<div class="radio" style="left:865.8px;top:463.1px"></div>
<div class="t" style="left:885px;top:465px;font-size:12px;line-height:12px;">Middle</div>
<div class="radio" style="left:755.8px;top:482.8px"></div>
<div class="t" style="left:775px;top:485px;font-size:12px;line-height:12px;">Max</div>
<div class="radio" style="left:865.8px;top:482.8px"></div>
<div class="t" style="left:885px;top:485px;font-size:12px;line-height:12px;">Max</div>
<div class="radio" style="left:755.8px;top:511.0px"></div>
<div class="t" style="left:775px;top:513px;font-size:12px;line-height:12px;">Other</div>
<div class="radio" style="left:865.8px;top:511.0px"></div>
<div class="t" style="left:885px;top:513px;font-size:12px;line-height:12px;">Other</div>
<div class="a" style="left:755px;top:531px;width:74px;height:22px;border:1px solid #bdbdbd;background:#f2f2f2"></div>
<div class="a" style="left:864px;top:531px;width:74px;height:22px;border:1px solid #bdbdbd;background:#f2f2f2"></div>
<div class="t" style="left:762px;top:537px;font-size:12px;line-height:12px;">0.0</div>
<div class="t" style="left:871px;top:537px;font-size:12px;line-height:12px;">0.0</div>
<svg class="a" style="left:980px;top:420px" width="200" height="120" viewBox="980 420 200 120">
<path d="M997.2 470.6L1051.1 436.7L1158.9 476.1L1105 509.4Z" fill="#8690f2" stroke="#3a3a7a" stroke-width=".7"/>
<g fill="none" stroke="#555" stroke-width=".8"><path d="M997.2 489.4L1051.1 456.1L1158.9 495L1105 528.3Z"/><path d="M997.2 470.6V489.4M1051.1 436.7V456.1M1158.9 476.1V495M1105 509.4V528.3"/></g>
<path d="M995 465.8L1043 435.5" stroke="#1414c8" stroke-width="1.6"/><path d="M1047 433.5L1038.5 435.2L1042 440Z" fill="#1414c8"/>
<path d="M996.1 494.7L1080 525" stroke="#e41414" stroke-width="2.8"/><path d="M1090 528.5L1077 520.5L1075.5 528Z" fill="#e41414"/>
<text x="1004.5" y="450.8" font-family="Liberation Sans" font-weight="bold" font-size="19" fill="#1414c8" stroke="#1414c8" stroke-width=".6">Y</text>
<text x="1006.5" y="524" font-family="Liberation Sans" font-weight="bold" font-size="19" fill="#e41414" stroke="#e41414" stroke-width=".6">X</text>
</svg>
<div class="btn" style="left:754px;top:607px;width:180px;height:36px"></div>
<div class="btn" style="left:754px;top:649px;width:180px;height:36px"></div>
<svg class="a" style="left:780px;top:617px" width="16" height="15" viewBox="0 0 16 15"><path d="M8 1.5L14.5 6.2L12 13.5H4L1.5 6.2Z" fill="none" stroke="#9a6ae0" stroke-width="1"/><path d="M4 13.5H12" stroke="#d070e0" stroke-width="1.6"/></svg>
<svg class="a" style="left:780px;top:659px" width="16" height="15" viewBox="0 0 16 15"><path d="M2 12.5Q5 13 7 8Q9 3 13.5 2.5" fill="none" stroke="#4a8ad0" stroke-width="1"/><rect x="0.5" y="11" width="3" height="3" fill="#5a9ae0"/><rect x="12" y="1" width="3" height="3" fill="#5a9ae0"/></svg>
<div class="t" style="left:800px;top:620px;font-size:12px;line-height:12px;letter-spacing:-.25px">Pick Center of Shape</div>
<div class="t" style="left:800px;top:662px;font-size:12px;line-height:12px;letter-spacing:-.25px">Pick Center of Curve</div>
<div class="btn" style="left:975px;top:649px;width:106px;height:34px"></div>
<div class="btn" style="left:1092px;top:649px;width:72px;height:34px"></div>
<div class="t" style="left:990px;top:661px;font-size:12px;line-height:12px;">Apply &amp; Close</div>
<div class="t" style="left:1114px;top:661px;font-size:12px;line-height:12px;">Close</div>
</body></html>
